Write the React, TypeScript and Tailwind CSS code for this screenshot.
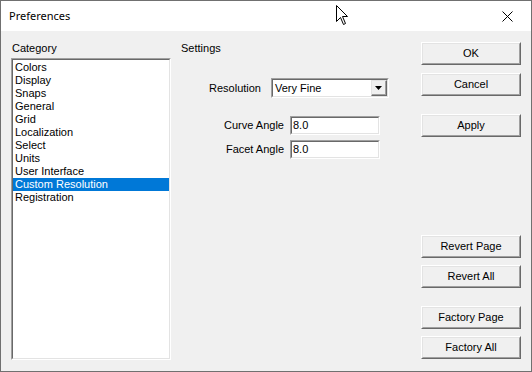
const categories = [
  "Colors",
  "Display",
  "Snaps",
  "General",
  "Grid",
  "Localization",
  "Select",
  "Units",
  "User Interface",
  "Custom Resolution",
  "Registration",
];

const Sunken = ({ className, children }: { className: string; children?: React.ReactNode }) => (
  <div className={`border border-t-[#a0a0a0] border-l-[#a0a0a0] border-b-white border-r-white ${className}`}>
    <div className="h-full w-full border border-t-[#696969] border-l-[#696969] border-b-[#e3e3e3] border-r-[#e3e3e3] bg-white">
      {children}
    </div>
  </div>
);

const Button = ({ label, className = "" }: { label: string; className?: string }) => (
  <div className={`h-[23px] w-[100px] border border-t-white border-l-white border-b-[#696969] border-r-[#696969] ${className}`}>
    <div className="flex h-full w-full items-center justify-center border border-t-[#e3e3e3] border-l-[#e3e3e3] border-b-[#a0a0a0] border-r-[#a0a0a0] bg-[#f0f0f0] text-[11px] text-black">
      {label}
    </div>
  </div>
);

export default function App() {
  return (
    <div className="flex h-[372px] w-[532px] flex-col border border-[#707070] bg-[#f0f0f0] font-['Liberation_Sans',Arial,sans-serif] text-[11px] text-black">
      <div className="relative flex h-[30px] items-center bg-white pl-[8px] font-['Noto_Sans',sans-serif] text-[11px]">
        <span>Preferences</span>
        <svg className="absolute left-[335px] top-[4px]" width="13" height="21" viewBox="0 0 13 21">
          <path d="M0.5 0.5 L0.5 16.5 L4.5 12.5 L7.5 19.5 L9.5 18.5 L6.5 11.5 L11.5 11.5 Z" fill="white" stroke="black" strokeWidth="1" />
        </svg>
        <svg className="absolute left-[501px] top-[10px]" width="11" height="11" viewBox="0 0 11 11">
          <path d="M0.5 0.5 L10.5 10.5 M10.5 0.5 L0.5 10.5" stroke="black" strokeWidth="1" />
        </svg>
      </div>

      <div className="flex flex-1">
        <div className="flex flex-col pl-[10px] pt-[10px]">
          <div className="h-[14px] leading-[14px] pl-[1px]">Category</div>
          <Sunken className="mt-[3px] h-[302px] w-[160px]">
            <div className="flex flex-col pt-[1px]">
              {categories.map((c) => (
                <div
                  key={c}
                  className={`h-[13px] leading-[13px] pl-[2px] ${c === "Custom Resolution" ? "bg-[#0078d7] text-white" : ""}`}
                >
                  {c}
                </div>
              ))}
            </div>
          </Sunken>
        </div>

        <div className="ml-[10px] flex w-[240px] flex-col pt-[10px]">
          <div className="h-[14px] leading-[14px]">Settings</div>
          <div className="mt-[23px] flex items-center">
            <div className="w-[80px] text-right">Resolution</div>
            <Sunken className="ml-[10px] h-[20px] w-[118px]">
              <div className="flex h-full items-center">
                <span className="flex-1 pl-[2px]">Very Fine</span>
                <div className="h-[16px] w-[16px] border border-t-[#e3e3e3] border-l-[#e3e3e3] border-b-[#696969] border-r-[#696969]">
                  <div className="flex h-full w-full items-center justify-center border-b border-r border-b-[#a0a0a0] border-r-[#a0a0a0] bg-[#f0f0f0]">
                    <svg width="7" height="4" viewBox="0 0 7 4">
                      <path d="M0 0 H7 L3.5 4 Z" fill="black" />
                    </svg>
                  </div>
                </div>
              </div>
            </Sunken>
          </div>
          <div className="mt-[18px] flex items-center">
            <div className="w-[103px] text-right">Curve Angle</div>
            <Sunken className="ml-[6px] h-[19px] w-[90px]">
              <div className="flex h-full items-center pl-[1px]">8.0</div>
            </Sunken>
          </div>
          <div className="mt-[5px] flex items-center">
            <div className="w-[103px] text-right">Facet Angle</div>
            <Sunken className="ml-[6px] h-[19px] w-[90px]">
              <div className="flex h-full items-center pl-[1px]">8.0</div>
            </Sunken>
          </div>
        </div>

        <div className="flex flex-col pt-[11px]">
          <Button label="OK" />
          <Button label="Cancel" className="mt-[8px]" />
          <Button label="Apply" className="mt-[18px]" />
          <Button label="Revert Page" className="mt-[98px]" />
          <Button label="Revert All" className="mt-[7px]" />
          <Button label="Factory Page" className="mt-[18px]" />
          <Button label="Factory All" className="mt-[7px]" />
        </div>
      </div>
    </div>
  );
}
